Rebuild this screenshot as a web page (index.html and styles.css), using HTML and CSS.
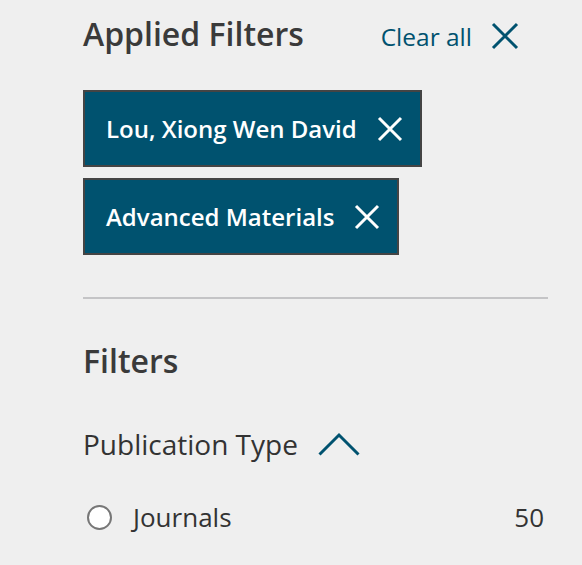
FILE: index.html
```html
<!DOCTYPE html>
<html>
<head>
<meta charset="utf-8">
<link rel="stylesheet" href="styles.css">
</head>
<body>
<div class="panel">
  <div class="applied-head">
    <h2 class="title">Applied Filters</h2>
    <a class="clear-all">Clear all
      <svg class="clear-x" width="28" height="28" viewBox="0 0 28 28"><path d="M2 2 L26 26 M26 2 L2 26" stroke="#00526f" stroke-width="3" fill="none"/></svg>
    </a>
  </div>
  <div class="chips">
    <div class="chip">Lou, Xiong Wen David
      <svg class="chip-x" width="26" height="26" viewBox="0 0 26 26"><path d="M2 2 L24 24 M24 2 L2 24" stroke="#fff" stroke-width="3" fill="none"/></svg>
    </div>
    <div class="chip">Advanced Materials
      <svg class="chip-x" width="26" height="26" viewBox="0 0 26 26"><path d="M2 2 L24 24 M24 2 L2 24" stroke="#fff" stroke-width="3" fill="none"/></svg>
    </div>
  </div>
  <hr class="divider">
  <h2 class="title filters-title">Filters</h2>
  <div class="group-head">
    <span>Publication Type</span>
    <svg class="chevron" width="42" height="24" viewBox="0 0 42 24"><path d="M1.5 22.5 L21 3 L40.5 22.5" stroke="#00526f" stroke-width="3" fill="none"/></svg>
  </div>
  <div class="option">
    <span class="radio"></span>
    <span class="opt-label">Journals</span>
    <span class="opt-count">50</span>
  </div>
</div>
</body>
</html>
```
FILE: styles.css
```css
html, body {
  margin: 0;
  padding: 0;
  background: #efefef;
}
body {
  font-family: "Open Sans", "Liberation Sans", sans-serif;
  color: #333;
}
.panel {
  width: 465px;
  margin-left: 83px;
  padding-top: 14px;
}
.applied-head {
  display: flex;
  align-items: center;
  justify-content: space-between;
  padding-right: 29px;
}
.title {
  margin: 0;
  font-size: 32px;
  font-weight: 600;
  line-height: 40px;
  color: #3a3a3a;
}
.clear-all {
  display: flex;
  align-items: center;
  gap: 19px;
  color: #00526f;
  font-size: 24.5px;
  font-weight: 500;
  padding-top: 4px;
}
.chips {
  display: flex;
  flex-direction: column;
  align-items: flex-start;
  gap: 11px;
  margin-top: 36px;
}
.chip {
  display: flex;
  align-items: center;
  gap: 20px;
  background: #00526f;
  border: 2px solid #444;
  color: #fff;
  font-size: 24px;
  font-weight: 600;
  box-sizing: border-box;
  height: 77px;
  padding: 0 17px 0 21px;
}
.divider {
  border: none;
  border-top: 2px solid #c4c4c6;
  margin: 42px 0 0;
}
.filters-title {
  margin-top: 42px;
}
.group-head {
  display: flex;
  align-items: center;
  gap: 20px;
  margin-top: 44px;
  font-size: 28px;
  line-height: 38px;
}
.option {
  display: flex;
  align-items: center;
  margin-top: 36px;
  padding-left: 4px;
  font-size: 26px;
}
.radio {
  width: 25px;
  height: 25px;
  box-sizing: border-box;
  border: 2px solid #777;
  border-radius: 50%;
  background: #fff;
}
.opt-label {
  margin-left: 21px;
  flex: 1;
}
.opt-count {
  padding-right: 4px;
}
```
